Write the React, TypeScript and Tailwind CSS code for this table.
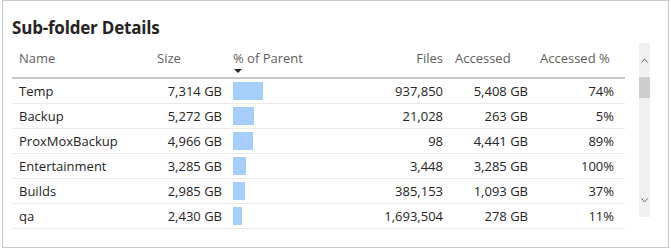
import React from 'react';

interface Folder {
  name: string;
  size: string;
  pct: number;
  files: string;
  accessed: string;
  accessedPct: string;
}

const folders: Folder[] = [
  { name: 'Temp', size: '7,314 GB', pct: 30, files: '937,850', accessed: '5,408 GB', accessedPct: '74%' },
  { name: 'Backup', size: '5,272 GB', pct: 21, files: '21,028', accessed: '263 GB', accessedPct: '5%' },
  { name: 'ProxMoxBackup', size: '4,966 GB', pct: 20, files: '98', accessed: '4,441 GB', accessedPct: '89%' },
  { name: 'Entertainment', size: '3,285 GB', pct: 13, files: '3,448', accessed: '3,285 GB', accessedPct: '100%' },
  { name: 'Builds', size: '2,985 GB', pct: 12, files: '385,153', accessed: '1,093 GB', accessedPct: '37%' },
  { name: 'qa', size: '2,430 GB', pct: 9, files: '1,693,504', accessed: '278 GB', accessedPct: '11%' },
];

const grid = 'grid grid-cols-[138px_76px_114px_107px_85px_93px]';

function Chevron({ up }: { up?: boolean }) {
  return (
    <svg width="7" height="5" viewBox="0 0 7 5" className="text-[#666]">
      <path d={up ? 'M0.5 4.5 L3.5 1 L6.5 4.5' : 'M0.5 0.5 L3.5 4 L6.5 0.5'} fill="none" stroke="currentColor" strokeWidth="1" />
    </svg>
  );
}

export default function App() {
  return (
    <div className="w-[671px] h-[250px] bg-white font-['Open_Sans',sans-serif]">
      <div className="ml-[2px] w-[667px] h-[248px] border border-[#c8c8c8] pl-[9px] pt-[15px]">
        <div className="text-[17px] leading-[24px] font-bold text-[#252423] tracking-[-0.2px]">Sub-folder Details</div>
        <div className="flex mt-[3px]">
          {/* table */}
          <div className="w-[613px] text-[13px] leading-[18px]">
            <div className={`${grid} h-[36px] border-b-2 border-[#c8c8c8] text-[#605e5c]`}>
              <div className="pl-[7px] pt-[6px]">Name</div>
              <div className="pl-[7px] pt-[6px]">Size</div>
              <div className="pl-[7px] pt-[6px] flex flex-col">
                <span>% of Parent</span>
                <span className="ml-[1px] mt-[2px] w-0 h-0 border-l-[4px] border-r-[4px] border-t-[4px] border-l-transparent border-r-transparent border-t-[#252423]" />
              </div>
              <div className="pr-[4px] pt-[6px] text-right">Files</div>
              <div className="pl-[8px] pt-[6px]">Accessed</div>
              <div className="pl-[8px] pt-[6px]">Accessed %</div>
            </div>
            {folders.map(f => (
              <div key={f.name} className={`${grid} h-[25px] border-b border-[#eaeaea] text-[#252423] items-center`}>
                <div className="pl-[7px]">{f.name}</div>
                <div className="pr-[4px] text-right">{f.size}</div>
                <div className="pl-[7px]">
                  <div className="h-[18px] bg-[#a6cefa]" style={{ width: f.pct }} />
                </div>
                <div className="pr-[4px] text-right">{f.files}</div>
                <div className="pr-[4px] text-right">{f.accessed}</div>
                <div className="pr-[11px] text-right">{f.accessedPct}</div>
              </div>
            ))}
          </div>
          {/* scrollbar */}
          <div className="ml-[14px] w-[11px] h-[174px] bg-[#f0f0f0] flex flex-col items-center">
            <div className="h-[34px] flex items-center justify-center">
              <Chevron up />
            </div>
            <div className="w-full h-[21px] bg-[#cdcdcd]" />
            <div className="flex-1" />
            <div className="h-[34px] flex items-center justify-center">
              <Chevron />
            </div>
          </div>
        </div>
      </div>
    </div>
  );
}
